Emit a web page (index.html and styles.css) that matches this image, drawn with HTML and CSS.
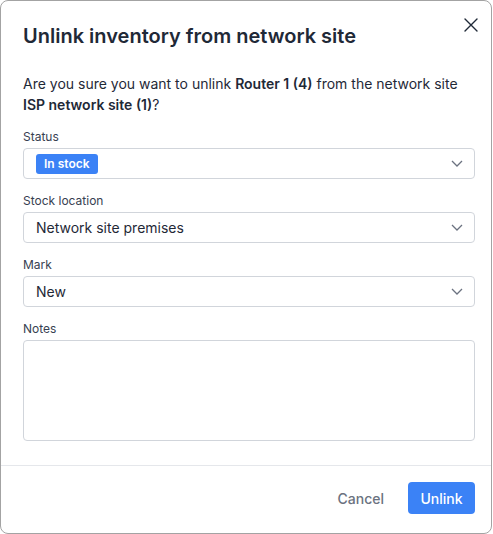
FILE: index.html
```html
<!DOCTYPE html>
<html lang="en">
<head>
<meta charset="utf-8">
<title>Unlink inventory</title>
<link rel="stylesheet" href="styles.css">
</head>
<body>
<div class="modal">
  <div class="header">
    <h1 class="title">Unlink inventory from network site</h1>
    <button class="close" aria-label="Close">
      <svg width="14" height="14" viewBox="0 0 14 14"><path d="M1 1L13 13M13 1L1 13" stroke="#1f2937" stroke-width="1.4" fill="none" stroke-linecap="round"/></svg>
    </button>
  </div>
  <div class="body">
    <p class="message">Are you sure you want to unlink <b>Router 1 (4)</b> from the network site <b>ISP network site (1)</b>?</p>
    <div class="field">
      <label class="label">Status</label>
      <div class="select">
        <span class="badge">In stock</span>
        <svg class="chev" width="12" height="7" viewBox="0 0 12 7"><path d="M1 1l5 5 5-5" stroke="#6b7280" stroke-width="1.3" fill="none"/></svg>
      </div>
    </div>
    <div class="field">
      <label class="label">Stock location</label>
      <div class="select">
        <span class="value">Network site premises</span>
        <svg class="chev" width="12" height="7" viewBox="0 0 12 7"><path d="M1 1l5 5 5-5" stroke="#6b7280" stroke-width="1.3" fill="none"/></svg>
      </div>
    </div>
    <div class="field">
      <label class="label">Mark</label>
      <div class="select">
        <span class="value">New</span>
        <svg class="chev" width="12" height="7" viewBox="0 0 12 7"><path d="M1 1l5 5 5-5" stroke="#6b7280" stroke-width="1.3" fill="none"/></svg>
      </div>
    </div>
    <div class="field">
      <label class="label">Notes</label>
      <div class="textarea"></div>
    </div>
  </div>
  <div class="footer">
    <button class="btn btn-cancel">Cancel</button>
    <button class="btn btn-primary">Unlink</button>
  </div>
</div>
</body>
</html>
```
FILE: styles.css
```css
* { box-sizing: border-box; }
html, body { margin: 0; padding: 0; background: #ffffff; }
body {
  font-family: Inter, "Noto Sans", sans-serif;
  color: #1f2937;
}
.modal {
  width: 492px;
  height: 534px;
  border: 1px solid #a3a3a3;
  border-radius: 8px;
  background: #fff;
  display: flex;
  flex-direction: column;
}
.header {
  display: flex;
  justify-content: space-between;
  align-items: flex-start;
  padding: 21px 13px 0 22px;
}
.title {
  margin: 0;
  font-size: 20px;
  line-height: 28px;
  font-weight: 600;
  color: #1f2937;
}
.close {
  border: 0;
  background: none;
  padding: 0;
  margin-top: -4px;
  width: 14px;
  height: 14px;
  display: flex;
  cursor: pointer;
}
.body {
  padding: 23px 16px 24px 22px;
  display: flex;
  flex-direction: column;
  gap: 12px;
  border-bottom: 1px solid #e5e7eb;
}
.message {
  margin: 0;
  font-size: 14px;
  line-height: 21px;
  color: #1f2937;
}
.message b { font-weight: 600; }
.field {
  display: flex;
  flex-direction: column;
  gap: 2px;
}
.label {
  font-size: 12px;
  line-height: 18px;
  padding-top: 1px;
  color: #374151;
}
.select {
  height: 31px;
  border: 1px solid #d1d5db;
  border-radius: 4px;
  display: flex;
  align-items: center;
  justify-content: space-between;
  padding: 0 11px 0 12px;
}
.value {
  font-size: 14px;
  color: #1f2937;
}
.badge {
  background: #3b82f6;
  color: #fff;
  font-size: 12px;
  font-weight: 600;
  line-height: 20px;
  height: 20px;
  padding: 0 8px;
  border-radius: 3px;
}
.chev { display: block; }
.textarea {
  height: 101px;
  border: 1px solid #d1d5db;
  border-radius: 4px;
}
.footer {
  display: flex;
  justify-content: flex-end;
  gap: 12px;
  padding: 16px 16px 0 0;
}
.btn {
  font-family: Inter, "Noto Sans", sans-serif;
  font-size: 14px;
  font-weight: 500;
  height: 32px;
  border: 0;
  border-radius: 4px;
  padding: 0 12px;
  cursor: pointer;
}
.btn-cancel {
  background: none;
  color: #6b7280;
}
.btn-primary {
  background: #3b82f6;
  color: #fff;
  width: 67px;
}
```
